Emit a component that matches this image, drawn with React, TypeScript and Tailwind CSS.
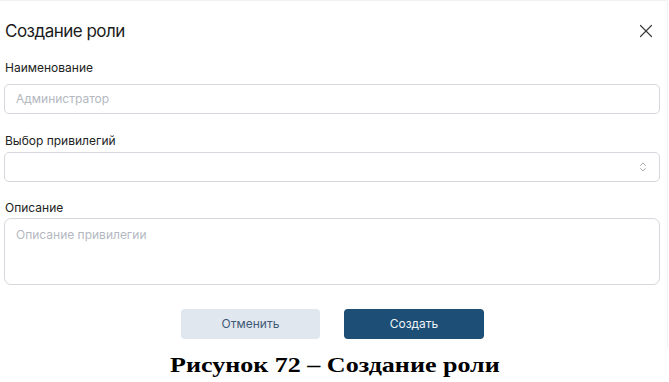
import { X, ChevronsUpDown } from "lucide-react";

export default function App() {
  return (
    <div className="h-[382px] w-[669px] overflow-hidden bg-white font-['Inter','Noto_Sans',sans-serif]">
      <div className="flex h-[348px] w-[668px] flex-col border-r border-t border-[#f1f1f1] pl-[4px] pr-[7px]">
        {/* заголовок */}
        <div className="flex h-[60px] items-center justify-between pl-[1px]">
          <span className="text-[17px] leading-none tracking-[-0.03em] text-[#1c1c1c]">Создание роли</span>
          <X className="mr-[3px] h-[22px] w-[22px] text-[#3a3a3a]" strokeWidth={1.3} />
        </div>

        <label className="pl-[1px] text-[12px] leading-[14px] text-[#222]">Наименование</label>
        <div className="mt-[9px] flex h-[30px] items-center rounded-[5px] border border-[#d4d7dc] px-[11px] text-[12px] text-[#b3b8bf]">
          Администратор
        </div>

        <label className="mt-[20px] pl-[1px] text-[12px] leading-[14px] text-[#222]">Выбор привилегий</label>
        <div className="mt-[4px] flex h-[30px] items-center justify-end rounded-[5px] border border-[#d4d7dc] px-[10px]">
          <ChevronsUpDown className="h-[12px] w-[12px] text-[#8a8f96]" strokeWidth={1.5} />
        </div>

        <label className="mt-[19px] pl-[1px] text-[12px] leading-[14px] text-[#222]">Описание</label>
        <div className="mt-[3px] h-[67px] rounded-[7px] border border-[#d4d7dc] px-[11px] pt-[9px] text-[12px] leading-[14px] text-[#b3b8bf]">
          Описание привилегии
        </div>

        <div className="mt-[24px] flex justify-center gap-[24px] pl-[1px]">
          <button className="h-[30px] w-[139px] rounded-[4px] bg-[#e1e7ee] text-[12px] text-[#3e5a76]">Отменить</button>
          <button className="h-[30px] w-[140px] rounded-[4px] bg-[#1c4e76] text-[12px] text-[#eef3f8]">Создать</button>
        </div>
      </div>
      <div className="flex h-[34px] items-center justify-center">
        <span className="origin-center scale-x-[1.24] font-['Liberation_Serif','Times_New_Roman',serif] text-[21px] font-bold leading-none text-black">
          Рисунок 72 – Создание роли
        </span>
      </div>
    </div>
  );
}
